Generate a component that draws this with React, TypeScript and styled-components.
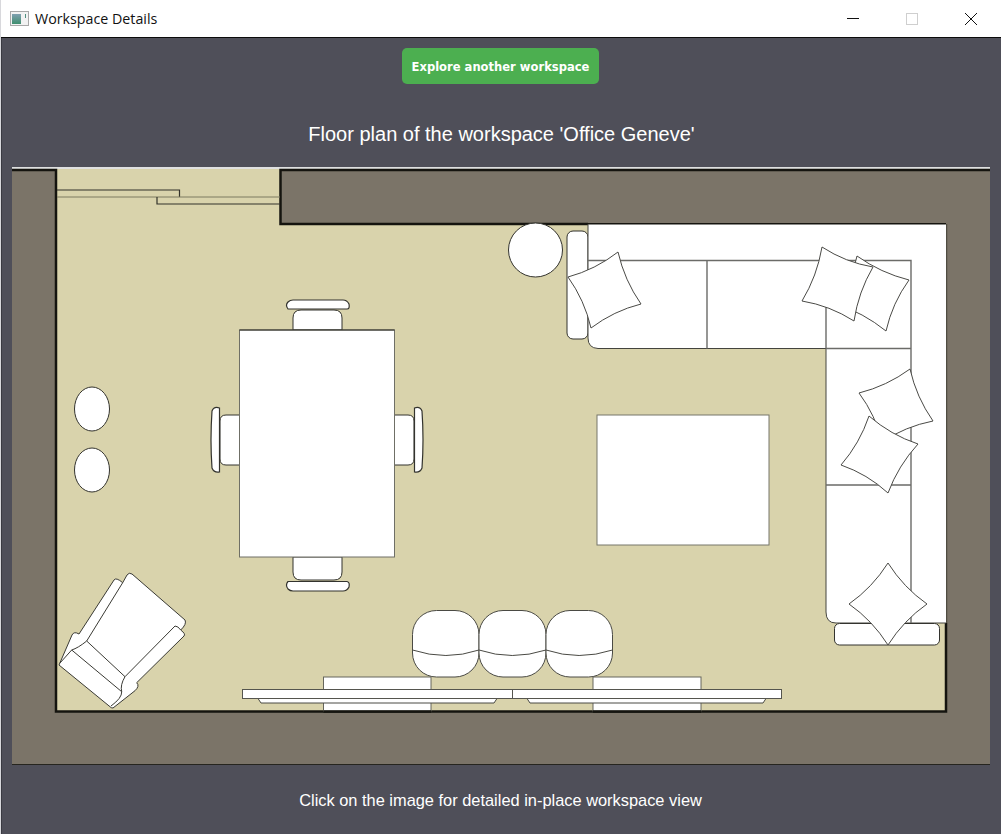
import React from "react";
import styled, { createGlobalStyle } from "styled-components";

const Global = createGlobalStyle`
  html, body { margin: 0; padding: 0; background: #4f4f59; }
  #root { height: 834px; overflow: hidden; }
`;

const Window = styled.div`
  height: 834px;
  display: flex;
  flex-direction: column;
  border-left: 1px solid #d8d8dc;
  box-sizing: border-box;
`;

const TitleBar = styled.header`
  height: 37px;
  flex: none;
  display: flex;
  align-items: center;
  background: #fff;
  border-bottom: 1px solid #0b0b0b;
  padding: 0 1px 0 9px;
  color: #111;
  font: 14.25px "Open Sans", "Noto Sans", sans-serif;
`;

const AppIcon = styled.svg`
  width: 20px;
  height: 16px;
  margin-right: 5px;
`;

const TitleText = styled.span`
  flex: 1;
`;

const WindowControl = styled.button`
  width: 59px;
  height: 37px;
  padding: 0;
  display: flex;
  align-items: center;
  justify-content: center;
  border: 0;
  background: transparent;
`;

const Content = styled.main`
  flex: 1;
  display: flex;
  flex-direction: column;
  align-items: center;
  background: #4f4f59;
  border-left: 1px solid #3a3a42;
  padding-top: 10px;
  color: #fff;
  font-family: "Liberation Sans", Arial, sans-serif;
`;

const ExploreButton = styled.button`
  width: 197px;
  height: 36px;
  margin-right: 2px;
  padding: 1px 0 0;
  border: 0;
  border-radius: 5px;
  background: #4caf50;
  color: #fff;
  font: bold 11.55px "DejaVu Sans", Verdana, sans-serif;
`;

const Heading = styled.h1`
  margin: 0;
  height: 83px;
  display: flex;
  align-items: center;
  padding-top: 16px;
  box-sizing: border-box;
  font-size: 20px;
  font-weight: 400;
  line-height: 1;
`;

const PlanFrame = styled.div`
  align-self: stretch;
  margin: 0 11px 0 10px;
  height: 598px;
  flex: none;
`;

const PlanSvg = styled.svg`
  display: block;
  width: 978px;
  height: 598px;
  filter: blur(0.3px);
`;

const Hint = styled.p`
  margin: 0 2px 0 0;
  padding-top: 26px;
  font-size: 16.4px;
  line-height: 18px;
`;

type Pt = [number, number];

const pillowPath = (pts: Pt[]) => {
  const cx = pts.reduce((s, p) => s + p[0], 0) / pts.length;
  const cy = pts.reduce((s, p) => s + p[1], 0) / pts.length;
  let d = `M${pts[0][0]},${pts[0][1]}`;
  pts.forEach((p, i) => {
    const n = pts[(i + 1) % pts.length];
    const mx = (p[0] + n[0]) / 2;
    const my = (p[1] + n[1]) / 2;
    d += ` Q${mx + (cx - mx) * 0.2},${my + (cy - my) * 0.2} ${n[0]},${n[1]}`;
  });
  return d + "Z";
};

const pillows: Pt[][] = [
  [[618, 252], [641, 304], [591, 328], [568, 277]],
  [[857, 256], [909, 280], [886, 331], [836, 304]],
  [[822, 247], [873, 267], [854, 321], [802, 301]],
  [[910, 369], [933, 421], [882, 442], [859, 393]],
  [[869, 416], [918, 444], [888, 493], [841, 465]],
];

const FloorPlan = () => (
  <PlanSvg viewBox="12 167 978 598">
    <rect x="12" y="167" width="978" height="598" fill="#7b7468" />
    <rect x="12" y="167" width="978" height="2" fill="#dfe0e0" />
    <rect x="12" y="764" width="978" height="1" fill="#26251f" />
    <path d="M56,169 H280 V224 H946 V711.5 H56 Z" fill="#d9d3ac" />
    <path d="M12,170 H56 V711.5 H946 V623" fill="none" stroke="#15140f" strokeWidth="2.5" />
    <path d="M990,170 H280.5 V224 H588" fill="none" stroke="#15140f" strokeWidth="2.5" />
    <path d="M946,224 H588" fill="none" stroke="#15140f" strokeWidth="2" />
    <path d="M946.5,224 V623" fill="none" stroke="#4f4c42" strokeWidth="1.5" />

    <g fill="none" stroke="#33322a">
      <path d="M57,190 H179.5 V197" strokeWidth="1.2" />
      <path d="M57,197 H280" stroke="#7d7a60" strokeWidth="1" />
      <path d="M157,197 V204 H280" strokeWidth="1.2" />
    </g>

    <g fill="#fff" stroke="#565650" strokeWidth="1">
      <circle cx="535.5" cy="250" r="27" stroke="#33332e" />
      <rect x="567" y="231" width="21" height="108" rx="6" stroke="#33332e" />

      <path d="M588,224.5 H946 V623 H836 Q826,623 826,612 V348.5 H598 Q588,348 588,338 Z" stroke="none" />
      <path d="M588,224 V338 Q588,348 598,348.5 H826 V612 Q826,623 836,623 H946" fill="none" stroke="#44443e" />
      <path
        d="M588,260.5 H911 V623 M707,260.5 V348.5 M826,300 V348.5 M826,348.5 H911 M826,485 H911"
        fill="none"
        stroke="#6b6b68"
        strokeWidth="1.4"
      />

      <rect x="597" y="415" width="172" height="130" stroke="#77776a" />

      <rect x="834.5" y="623.5" width="105" height="21.5" rx="5" stroke="#33332e" />

      {pillows.map((p, i) => (
        <path key={i} d={pillowPath(p)} stroke="#4a4a46" />
      ))}
      <path d={pillowPath([[888, 563], [927, 604], [888, 645], [849, 604]])} stroke="#4a4a46" />

      <g stroke="#33332e">
        <path d="M293,330 V318 Q293,310 301,310 H334 Q342,310 342,318 V330 Z" />
        <path d="M288,309 Q285,305 288,302 Q290,300 293,300 H343 Q347,300 349,304 Q350,309 347,309 Z" strokeWidth="1.2" />
        <path d="M293,557 V572 Q293,580 301,580 H334 Q342,580 342,572 V557 Z" />
        <path d="M288,581.5 Q285,585 288,589 Q290,591 293,591 H343 Q347,591 349,587 Q350,582 347,581.5 Z" strokeWidth="1.2" />
        <path d="M239.5,415 H226 Q220,415 220,421 V459 Q220,465 226,465 H239.5 Z" />
        <path d="M219.5,408 Q214,406 212,411 Q210,440 212,468 Q214,473 219.5,472 Z" strokeWidth="1.2" />
        <path d="M394.5,415 H408 Q414,415 414,421 V459 Q414,465 408,465 H394.5 Z" />
        <path d="M414.5,408 Q420,406 422,411 Q424,440 422,468 Q420,473 414.5,472 Z" strokeWidth="1.2" />
        <rect x="239.5" y="330" width="155" height="227" stroke="#6f6f66" />
        <path d="M239.5,330 H394.5" stroke="#26261f" />
      </g>

      <ellipse cx="92" cy="409" rx="17.5" ry="22" stroke="#33332e" />
      <ellipse cx="92" cy="470" rx="17.5" ry="22" stroke="#33332e" />

      <g stroke="#3a3a34">
        <path d="M59,665 L72,635 Q74,631 79,634 L114,580 Q116,577 122.7,582.7 L127,575 Q129,572 132,574 L185,620 Q187,624 180.7,630 Q186,634 184,636 L136.7,682.7 Q140,686 135,690.7 L113,708 Q111,708 110,706.7 Z" />
        <path d="M122.7,582.7 L86.7,641 L125,676.7 L175,626 Q178,626 180.7,630" fill="none" />
        <path d="M60,663 L71.7,650 Q78,648 86.7,641 M71.7,650 L121.7,691.7 M125,676.7 Q120,685 121.7,691.7 Q122,698 111,706" fill="none" />
      </g>

      <g stroke="#4a4a44">
        <rect x="323.5" y="677" width="107.5" height="34" stroke="#66665c" />
        <rect x="593" y="677" width="108" height="34" stroke="#66665c" />
        <path d="M258,698.5 H497 L494,703 H261 Z" />
        <path d="M527,698.5 H766 L763,703 H530 Z" />
        <rect x="242.5" y="689.5" width="270" height="9" stroke="#55554e" />
        <rect x="512.5" y="689.5" width="269" height="9" stroke="#55554e" />
      </g>

      <g stroke="#4a4a44">
        <rect x="412.5" y="610.5" width="66.5" height="66.5" rx="24" />
        <rect x="479" y="610.5" width="67" height="66.5" rx="24" />
        <rect x="546" y="610.5" width="66.5" height="66.5" rx="24" />
        <path d="M412.5,650 Q446,661 479,650 Q512,661 546,650 Q579,661 612.5,650" fill="none" />
      </g>

      <path d="M323.5,711.5 H431 M593,711.5 H701" fill="none" stroke="#15140f" strokeWidth="2.5" />
    </g>
  </PlanSvg>
);

export default function App() {
  return (
    <>
      <Global />
      <Window>
        <TitleBar>
          <AppIcon viewBox="0 0 20 16">
            <defs>
              <linearGradient id="ico" x1="0" y1="0" x2="0" y2="1">
                <stop offset="0" stopColor="#7f9fb0" />
                <stop offset="1" stopColor="#3f8f6f" />
              </linearGradient>
            </defs>
            <rect x="0.5" y="0.5" width="18" height="14" fill="#f2f2f2" stroke="#a8a8a8" />
            <rect x="2" y="3" width="9" height="10" fill="url(#ico)" />
            <rect x="15" y="3" width="1" height="4" fill="#4f8f80" />
          </AppIcon>
          <TitleText>Workspace Details</TitleText>
          <WindowControl aria-label="Minimise">
            <svg width="12" height="12" viewBox="0 0 12 12">
              <path d="M0,5.5 H12" stroke="#111" strokeWidth="1" />
            </svg>
          </WindowControl>
          <WindowControl aria-label="Maximise">
            <svg width="12" height="12" viewBox="0 0 12 12">
              <rect x="0.5" y="0.5" width="11" height="11" fill="none" stroke="#cfcfcf" />
            </svg>
          </WindowControl>
          <WindowControl aria-label="Close">
            <svg width="12" height="12" viewBox="0 0 12 12">
              <path d="M0,0 L12,12 M12,0 L0,12" stroke="#111" strokeWidth="1" />
            </svg>
          </WindowControl>
        </TitleBar>
        <Content>
          <ExploreButton>Explore another workspace</ExploreButton>
          <Heading>Floor plan of the workspace 'Office Geneve'</Heading>
          <PlanFrame>
            <FloorPlan />
          </PlanFrame>
          <Hint>Click on the image for detailed in-place workspace view</Hint>
        </Content>
      </Window>
    </>
  );
}
